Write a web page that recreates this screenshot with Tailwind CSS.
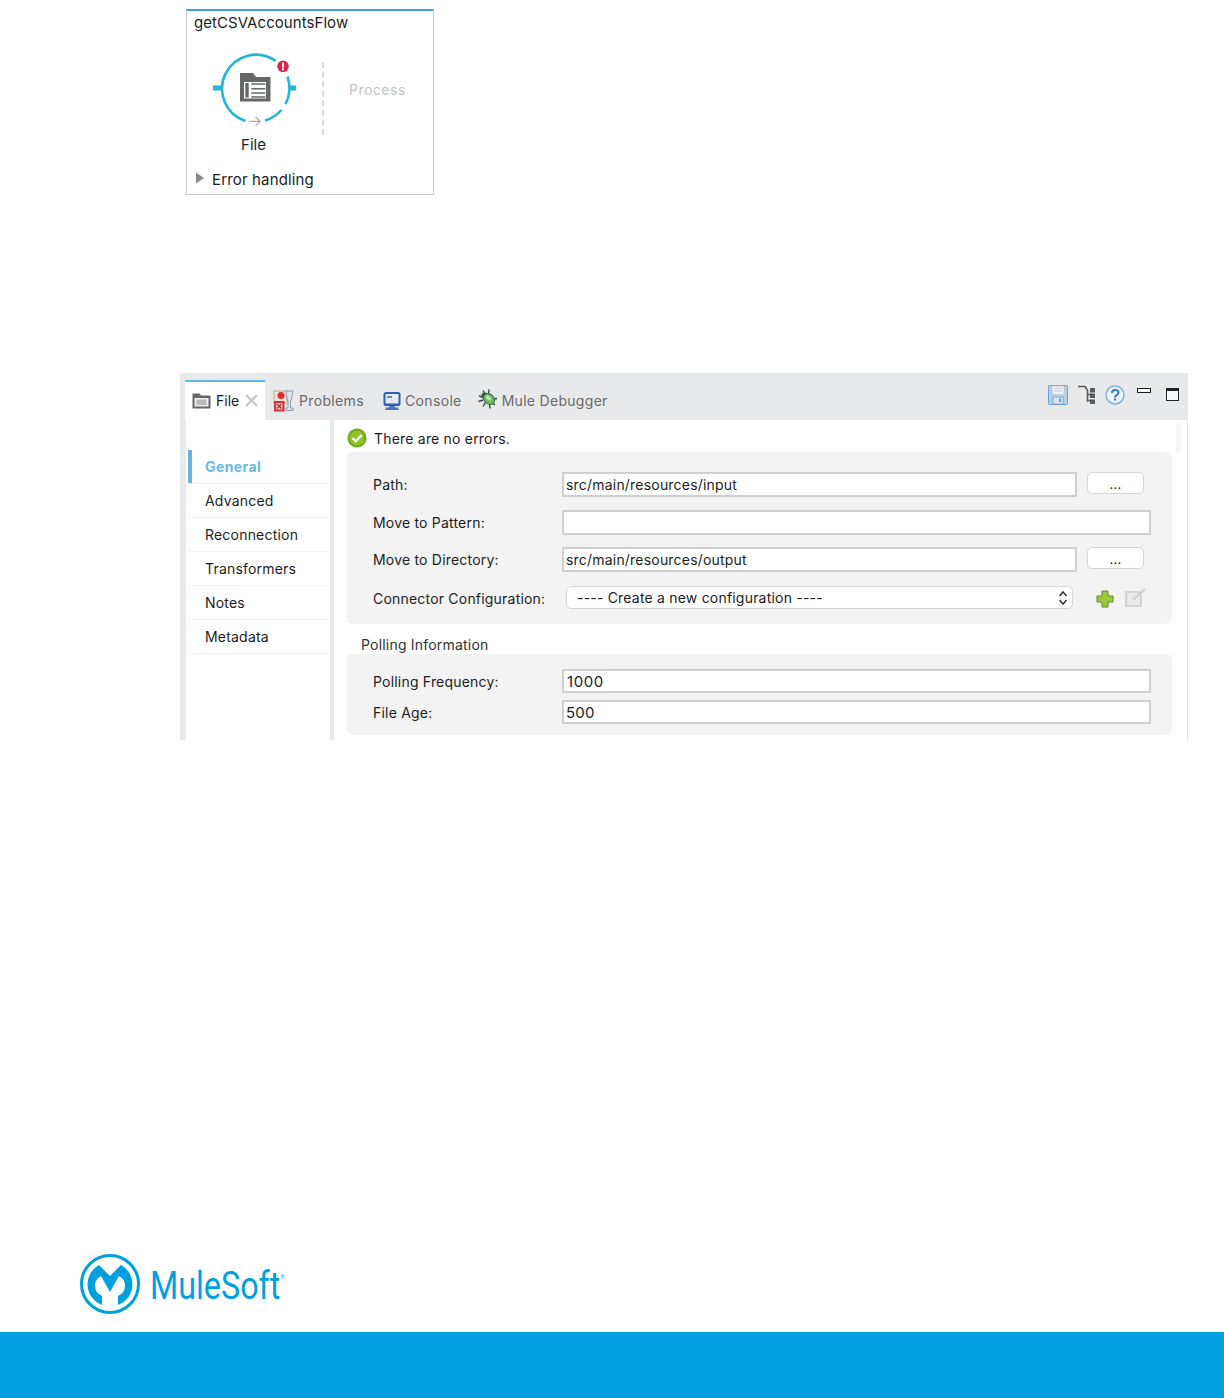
<!DOCTYPE html>
<html><head><meta charset="utf-8"><script src="https://cdn.jsdelivr.net/npm/@tailwindcss/browser@4"></script></head>
<body class="bg-white">
<div class="w-[1224px] h-[1398px] flex flex-col font-['Inter',sans-serif] text-[14px] text-[#1c1c1c] overflow-hidden">

<!-- flow card -->
<div class="ml-[186px] mt-[9px] w-[248px] h-[186px] shrink-0 border border-[#c9c9c9] border-t-2 border-t-[#3f9fe0] flex flex-col">
  <div class="ml-[7px] mt-[2px] h-[20px] leading-[20px] text-[15px] tracking-[0.06px]">getCSVAccountsFlow</div>
  <div class="flex h-[124px]">
    <div class="ml-[26px] mt-[18px] w-[84px] flex flex-col items-center">
      <svg class="block" width="84" height="78" viewBox="0 0 84 78">
        <g fill="none" stroke="#1fb7d5" stroke-width="2.600">
          <path d="M32.500 70A34 34 0 1 1 62.800 10"/>
          <path d="M74.400 25.500A34 34 0 0 1 72.500 53"/>
          <path d="M68.400 59A34 34 0 0 1 52 69.500"/>
        </g>
        <rect x="0" y="34.500" width="8" height="5" fill="#1fb7d5"/>
        <rect x="76" y="34.500" width="7" height="5" fill="#1fb7d5"/>
        <path d="M27 22h13l3 4h14.500v24.500H27z" fill="#666769"/>
        <rect x="31" y="31" width="22" height="16.500" fill="#fff"/>
        <rect x="32.300" y="32" width="3.400" height="14.500" fill="#666769"/>
        <path d="M38.300 33h14M38.300 37.700h14M38.300 42h14M38.300 46h14" stroke="#666769" stroke-width="1.400"/>
        <path d="M36.700 70.300h10.500M42.500 66l4.700 4.300-4.700 4.300" fill="none" stroke="#a6a8aa" stroke-width="1.200"/>
        <circle cx="70" cy="15.300" r="5.800" fill="#d5264b"/>
        <rect x="69" y="11.500" width="2" height="5" fill="#fff"/><rect x="69" y="17.300" width="2" height="2" fill="#fff"/>
      </svg>
      <div class="mt-[6px] h-[20px] leading-[20px] text-[15px] -ml-[3px]">File</div>
    </div>
    <div class="ml-[25px] mt-[29px] h-[73px] border-l-2 border-dashed border-[#d9d9d9]"></div>
    <div class="ml-[25px] mt-[47px] h-[20px] leading-[20px] text-[14px] text-[#c3c3c3] tracking-[0.5px]">Process</div>
  </div>
  <div class="ml-[8px] mt-[13px] flex items-center h-[20px]">
    <svg width="10" height="12" viewBox="0 0 10 12" class="-mt-[4px]"><path d="M1 0.500l8 5.500-8 5.500z" fill="#8a8a8a"/></svg>
    <span class="ml-[7px] leading-[20px] text-[15px] tracking-[0.15px]">Error handling</span>
  </div>
</div>

<!-- panel -->
<div class="ml-[180px] mt-[178px] w-[1008px] h-[367px] shrink-0 flex flex-col border-r border-[#e4e5e7] tracking-[0.2px]">
  <div class="h-[47px] shrink-0 bg-[#e8e9eb] flex text-[14px] text-[#6a6a6a] tracking-[0.35px]">
    <div class="ml-[5px] mt-[7px] w-[80px] h-[40px] bg-white border-t-2 border-t-[#63b5e6] flex items-center pl-[7px] pb-[1px] text-[#1c1c1c] tracking-normal">
      <svg width="19" height="16" viewBox="0 0 19 16"><path d="M0.500 0.500h7l1.500 2h9.500v13h-18z" fill="#666"/><rect x="2.500" y="5" width="14" height="8.500" fill="#eee"/><rect x="4.500" y="6.500" width="10" height="5.500" fill="#bbb"/></svg>
      <span class="ml-[5px] leading-[20px]">File</span>
      <svg class="ml-[6px]" width="13" height="13" viewBox="0 0 13 13"><path d="M1 1l11 11M12 1L1 12" stroke="#c4c4c4" stroke-width="2"/></svg>
    </div>
    <div class="ml-[8px] mt-[9px] h-[38px] flex items-center pb-[1px]">
      <svg width="21" height="22" viewBox="0 0 21 22"><rect x="1" y="1" width="13" height="12" fill="#efe6d8" stroke="#b5a88f" stroke-width="1"/><circle cx="8" cy="5.500" r="3.500" fill="#e32b2b"/><rect x="1" y="11" width="10.500" height="10.500" fill="#d92e3a"/><rect x="3" y="13" width="6.500" height="6.500" fill="#f2c6c9"/><path d="M4 14l4.500 4.500M8.500 14L4 18.500" stroke="#c0202c" stroke-width="1.200"/><path d="M13 1h7c-.5 4-1.500 8-2.500 10v7h2.500v2.500h-7V18h2v-7c-1-2-1.500-6-2-10z" fill="#dfe4ea" stroke="#8794a3" stroke-width=".9"/></svg>
      <span class="ml-[5px] leading-[20px]">Problems</span>
    </div>
    <div class="ml-[19px] mt-[9px] h-[38px] flex items-center pb-[1px]">
      <svg width="18" height="18" viewBox="0 0 18 18"><rect x="0.500" y="0" width="17" height="14" rx="2.500" fill="#2f5fae"/><rect x="2.500" y="2" width="13" height="9.500" fill="#e3ebf6"/><path d="M4 5h5" stroke="#2f5fae" stroke-width="1.400"/><path d="M6 14h6v1.500h3.500V18h-13v-2.500H6z" fill="#4a77bf"/></svg>
      <span class="ml-[4px] leading-[20px]">Console</span>
    </div>
    <div class="ml-[16px] mt-[9px] h-[38px] flex items-center pb-[1px] tracking-[0.3px]">
      <svg width="20" height="20" viewBox="0 0 20 20" class="-mt-[3px]"><path d="M1 7l5 1.500M5 1.500l2.500 4M11 0.500l-.5 4M0.500 12.500l5-1.500M19 9.500l-4 .5M17 16l-3.500-2.500M12 19.500l-.5-4M5 17.500l2.500-4" stroke="#2f4a44" stroke-width="1.400"/><circle cx="6.500" cy="6.500" r="3" fill="#2f5a50"/><ellipse cx="11" cy="10" rx="6.200" ry="4.800" transform="rotate(40 11 10)" fill="#6fbb5e" stroke="#2f6a4a" stroke-width="1"/><ellipse cx="10.500" cy="9" rx="3" ry="1.800" transform="rotate(40 10.500 9)" fill="#c4e8b4"/></svg>
      <span class="ml-[4px] leading-[20px]">Mule Debugger</span>
    </div>
    <div class="ml-auto flex items-start mt-[12px]">
      <svg width="20" height="20" viewBox="0 0 20 20"><rect x="0.500" y="0.500" width="19" height="19" rx="1" fill="#b9cfe6" stroke="#6f9fd4"/><rect x="4" y="1" width="12" height="8.500" fill="#eef1f5" stroke="#b8c4d2" stroke-width=".6"/><path d="M6 3.500h8M6 6h8" stroke="#c5ccd5"/><rect x="5" y="12" width="10" height="7" fill="#dfe7f1" stroke="#6f9fd4" stroke-width=".8"/><rect x="11" y="13.500" width="2" height="3.500" fill="#6f9fd4"/></svg>
      <svg class="ml-[10px]" width="18" height="20" viewBox="0 0 18 20"><path d="M0 1.500h7l2.500 4M9.500 5v12M9.500 9.500h4M9.500 15.500h4" fill="none" stroke="#5a5a5a" stroke-width="1.600"/><rect x="12" y="3" width="5" height="4.500" fill="#5a5a5a"/><rect x="12" y="8.500" width="5" height="4.500" fill="#5a5a5a"/><rect x="12" y="14.500" width="5" height="4.500" fill="#5a5a5a"/></svg>
      <svg class="ml-[9px]" width="20" height="20" viewBox="0 0 20 20"><circle cx="10" cy="10" r="9" fill="#edf4fb" stroke="#7fb0e0" stroke-width="1.500"/><path d="M7 8c0-4 6.500-4 6.500-.5 0 2.500-3.500 2.500-3.500 5" fill="none" stroke="#3a78c4" stroke-width="2"/><rect x="9" y="13.500" width="2" height="2" fill="#3a78c4"/></svg>
      <div class="ml-[12px] mt-[3px] w-[14px] h-[5px] border border-[#222] bg-white"></div>
      <div class="ml-[15px] mt-[3px] w-[13px] h-[13px] border border-[#222] border-t-[3px] bg-[#f6f6f6]"></div>
      <div class="w-[8px]"></div>
    </div>
  </div>
  <div class="flex flex-1 min-h-0">
    <div class="w-[6px] bg-[#e8e9eb]"></div>
    <div class="w-[144px] pt-[30px] text-[14px]">
      <div class="ml-[2px] h-[33px] leading-[33px] border-l-[4px] border-[#63b5e6] pl-[13px] font-bold text-[#67b9e6] tracking-[0.4px]">General</div>
      <div class="ml-[2px] h-[1px] bg-[#f3f3f3]"></div>
      <div class="ml-[2px] h-[34px] leading-[33px] pl-[17px] border-b border-[#f3f3f3]">Advanced</div>
      <div class="ml-[2px] h-[34px] leading-[33px] pl-[17px] border-b border-[#f3f3f3]">Reconnection</div>
      <div class="ml-[2px] h-[34px] leading-[33px] pl-[17px] border-b border-[#f3f3f3]">Transformers</div>
      <div class="ml-[2px] h-[34px] leading-[33px] pl-[17px] border-b border-[#f3f3f3]">Notes</div>
      <div class="ml-[2px] h-[34px] leading-[33px] pl-[17px] border-b border-[#f3f3f3]">Metadata</div>
    </div>
    <div class="w-[4px] bg-[#e8e9eb]"></div>
    <div class="w-[838px] ml-[13px] flex flex-col">
      <div class="h-[32px] flex items-center pt-[5px]">
        <svg width="20" height="20" viewBox="0 0 20 20" class="-mt-[2px]"><circle cx="10" cy="10" r="9.500" fill="#6fa716"/><circle cx="10" cy="10" r="7.500" fill="#8cc425"/><path d="M5.500 10l3.200 3.200 6-6" fill="none" stroke="#fff" stroke-width="2.400"/></svg>
        <span class="ml-[7px] leading-[20px]">There are no errors.</span>
        <div class="ml-auto mr-[4px] w-[5px] h-[29px] bg-[#f6f6f6] self-start -mt-[2px]"></div>
      </div>
      <div class="w-[825px] h-[172px] bg-[#f3f3f3] rounded-[6px] flex flex-col pt-[20px] pl-[26px]">
        <div class="flex h-[25px] items-center"><span class="w-[189px]">Path:</span><div class="w-[515px] h-[25px] bg-white border-2 border-[#cfcfcf] pl-[2px] leading-[21px]">src/main/resources/input</div><div class="ml-[10px] -mt-[3px] w-[57px] h-[22px] bg-white border border-[#d5d5d5] rounded-[5px] text-center text-[13px] leading-[22px]">...</div></div>
        <div class="flex h-[25px] items-center mt-[13px]"><span class="w-[189px]">Move to Pattern:</span><div class="w-[589px] h-[25px] bg-white border-2 border-[#cfcfcf]"></div></div>
        <div class="flex h-[25px] items-center mt-[12px]"><span class="w-[189px]">Move to Directory:</span><div class="w-[515px] h-[25px] bg-white border-2 border-[#cfcfcf] pl-[2px] leading-[21px]">src/main/resources/output</div><div class="ml-[10px] -mt-[3px] w-[57px] h-[22px] bg-white border border-[#d5d5d5] rounded-[5px] text-center text-[13px] leading-[22px]">...</div></div>
        <div class="flex h-[23px] items-center mt-[14px]"><span class="w-[193px] whitespace-nowrap pt-[2px]">Connector Configuration:</span>
          <div class="w-[507px] h-[23px] bg-white border border-[#d5d5d5] rounded-[5px] pl-[10px] leading-[21px] flex justify-between pr-[3px] items-center"><span>---- Create a new configuration ----</span><svg width="12" height="16" viewBox="0 0 12 16"><path d="M2.500 6l3.500-4 3.500 4M2.500 10l3.500 4 3.500-4" fill="none" stroke="#333" stroke-width="1.500"/></svg></div>
          <svg class="ml-[23px] mt-[3px]" width="18" height="18" viewBox="0 0 18 18"><path d="M6 1h6v5h5v6h-5v5H6v-5H1V6h5z" fill="#a0c83c" stroke="#5f8a2a"/></svg>
          <svg class="ml-[11px]" width="21" height="19" viewBox="0 0 21 19"><rect x="1" y="4" width="15" height="14" fill="#e9e9e9" stroke="#d3d3d3" stroke-width="2"/><path d="M8 12L20 1" stroke="#cfcfcf" stroke-width="2"/></svg>
        </div>
      </div>
      <div class="ml-[14px] mt-[12px] h-[18px] leading-[18px] text-[#333]">Polling Information</div>
      <div class="w-[825px] h-[81px] bg-[#f3f3f3] rounded-[6px] flex flex-col pt-[15px] pl-[26px]">
        <div class="flex h-[24px] items-center"><span class="w-[189px]">Polling Frequency:</span><div class="w-[589px] h-[24px] bg-white border-2 border-[#cfcfcf] pl-[3px] leading-[22px] text-[15px] tracking-[0.6px]">1000</div></div>
        <div class="flex h-[24px] items-center mt-[7px]"><span class="w-[189px]">File Age:</span><div class="w-[589px] h-[24px] bg-white border-2 border-[#cfcfcf] pl-[2px] leading-[22px] text-[15px]">500</div></div>
      </div>
    </div>
  </div>
</div>

<!-- footer -->
<div class="mt-auto">
  <div class="ml-[80px] flex items-center h-[60px]">
    <svg width="60" height="60" viewBox="-30 -30 60 60"><circle r="28.500" fill="none" stroke="#00a0df" stroke-width="3"/><path d="M-8 21A22 22 0 0 1-11-19L0-8 11-19A22 22 0 0 1 8 21V12A11 11 0 0 0 9-8L0 8-9-8A11 11 0 0 0-8 12Z" fill="#00a0df"/></svg>
    <span class="ml-[10px] pt-[4px] text-[38px] leading-[60px] text-[#00a0df] font-['Roboto',sans-serif] scale-x-[0.85] origin-left whitespace-nowrap">MuleSoft<sup class="text-[6px] align-baseline -top-[20px]">®</sup></span>
  </div>
  <div class="mt-[18px] h-[66px] bg-[#00a0e0]"></div>
</div>
</div>
</body></html>
